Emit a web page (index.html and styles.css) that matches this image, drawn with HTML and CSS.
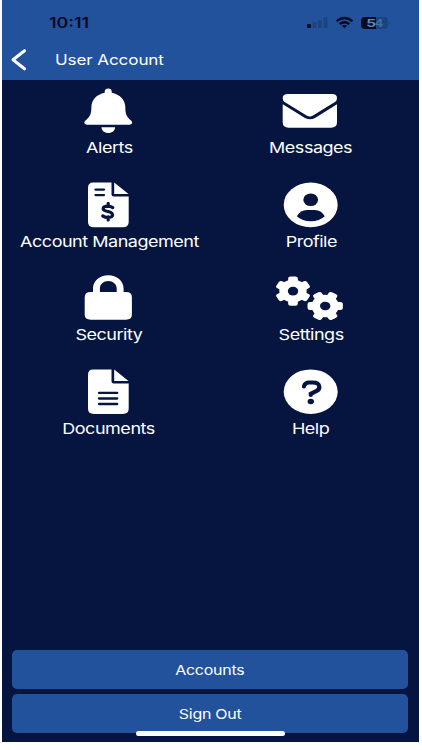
FILE: index.html
```html
<!DOCTYPE html>
<html lang="en">

<head>
	<meta charset="UTF-8">
	<title>User Account</title>
	<link rel="stylesheet" href="styles.css">
</head>

<body>
	<div class="phone">
		<header>
			<div class="status">
				<span class="time">10:11</span>
				<svg class="signal" width="84" height="16" viewBox="306 15 84 16">
					<rect x="307" y="24" width="4" height="4" rx="1" fill="#020b22" />
					<g fill="#1b4380">
						<rect x="312.5" y="22" width="4" height="6" rx="1" />
						<rect x="318" y="20" width="4" height="8" rx="1" />
						<rect x="323.6" y="17.3" width="4" height="10.7" rx="1" />
						<rect x="361" y="17" width="27" height="12" rx="4" />
						<path d="M389 21.2q1.8 1.8 0 3.6z" />
					</g>
					<path d="M365 17h11v12h-11q-4 0-4-4v-4q0-4 4-4z" fill="#020b22" />
					<g fill="none" stroke="#020b22" stroke-width="2.3">
						<path d="M336.5 21.1Q344.5 15 352.5 21.1" />
						<path d="M339.6 24.2Q344.5 20.4 349.4 24.2" />
					</g>
					<path d="M341.8 25.800q2.700-1.600 5.400 0L344.500 28.300z" fill="#020b22" />
					<text class="level" x="366.200" y="27.100" textLength="9.800" lengthAdjust="spacingAndGlyphs" fill="#6187bd">5</text>
					<text class="level" x="374.800" y="27.100" textLength="8.500" lengthAdjust="spacingAndGlyphs" fill="#426ba9">4</text>
				</svg>
			</div>
			<div class="title">
				<svg width="18" height="24" viewBox="10 48 18 24">
					<path d="M24.500 50.700L13 59.800 24.500 68.800" fill="none" stroke="#fff" stroke-width="3" stroke-linecap="round" stroke-linejoin="round" />
				</svg>
				<h1>User Account</h1>
			</div>
		</header>

		<ul class="menu">
			<li>
				<svg viewBox="74 88 68 46">
					<path d="M108.200 88.500c2 0 3.500 1.300 3.500 3v1.300c8 1.500 13.600 7.300 13.600 14.300 0 7 1.300 10 5.700 13.400 2.200 1.800 1 4.200-1.300 4.200H87c-2.600 0-3.700-2.400-1.500-4.200 4.400-3.400 5.900-6.400 5.900-13.400 0-7 5.400-12.800 13.300-14.300v-1.300c0-1.700 1.500-3 3.500-3z" />
					<path d="M101.500 127.200h13.600c0 3.300-3 5.800-6.800 5.800s-6.800-2.500-6.800-5.800z" />
				</svg>
				<span>Alerts</span>
			</li>
			<li>
				<svg viewBox="276 88 68 46">
					<path d="M288 94h44q5 0 5 4.200 0 2.700-2.500 4.100L313 115.500q-3.200 2-6.400 0L285 102.300q-2.300-1.400-2.300-4.100 0-4.200 5.300-4.200z" />
					<path d="M282.700 104.300L305 117.900q5 2.700 10 0l22-13.600v18q0 5.400-6 5.400h-42.300q-6 0-6-5.400z" />
				</svg>
				<span>Messages</span>
			</li>
			<li>
				<svg viewBox="74 181.600 68 46">
					<path d="M93 182h18.500v12q0 2 2.300 2h14.900v25.500q0 5.300-6 5.300H94q-6 0-6-5.300v-34q0-5.500 5-5.500z" />
					<path d="M114.200 182.200l14.300 11.300h-14.300z" />
					<path class="line" d="M95.500 189.200h8.500M95.500 194.700h8.500" />
					<path class="dollar" d="M112.800 207.200q-2.300-1.500-4.900-1.500c-6 0-6.300 4.200-.9 5.200 7.800 1.400 6.800 6.200.7 6.200q-2.800 0-5-1.600M108.200 203v3M108.200 216.500v3" />
				</svg>
				<span>Account Management</span>
			</li>
			<li>
				<svg viewBox="276 181.600 68 46">
					<ellipse cx="310.700" cy="204.500" rx="27" ry="22.300" />
					<ellipse class="cut" cx="310.700" cy="199.300" rx="7.400" ry="6.300" />
					<path class="cut" d="M296.800 215.800q3.800-6.200 10-6.200h8q6.200 0 10 6.200-5.500 5-14 5t-14-5z" />
				</svg>
				<span>Profile</span>
			</li>
			<li>
				<svg viewBox="74 275.200 68 46">
					<path fill-rule="evenodd" d="M93 292.300v-3.500c0-7.500 6.800-13.300 15.300-13.300s15.300 5.800 15.300 13.300v3.500h2.300q6 0 6 5.200v17.300q0 5.200-6 5.200H90.700q-6 0-6-5.200v-17.300q0-5.200 6-5.200zM99.900 292.300h16.800v-3.500c0-4.200-3.700-7.500-8.400-7.500s-8.400 3.300-8.400 7.500z" />
				</svg>
				<span>Security</span>
			</li>
			<li>
				<svg viewBox="276 275.200 68 46">
					<defs>
						<g id="gear">
							<circle r="11.300" />
							<rect x="-4" y="-14.600" width="8" height="29.200" rx="2" />
							<rect x="-4" y="-14.600" width="8" height="29.200" rx="2" transform="rotate(60)" />
							<rect x="-4" y="-14.600" width="8" height="29.200" rx="2" transform="rotate(120)" />
							<circle class="cut" r="4.300" />
						</g>
					</defs>
					<use href="#gear" transform="translate(293 291.300) scale(1.210 1)" />
					<use href="#gear" transform="translate(325.200 306.200) scale(1.210 1) rotate(30)" />
				</svg>
				<span>Settings</span>
			</li>
			<li>
				<svg viewBox="74 368.800 68 46">
					<path d="M93 369.200h18.500v12q0 2 2.300 2h14.900v25.300q0 5.200-6 5.200H94q-6 0-6-5.200v-34q0-5.300 5-5.300z" />
					<path d="M114.200 369.400l14.300 11.300h-14.300z" />
					<path class="line" d="M99 392.700h18.200M99 398.300h18.200M99 403.800h18.200" />
				</svg>
				<span>Documents</span>
			</li>
			<li>
				<svg viewBox="276 368.800 68 46">
					<ellipse cx="310.700" cy="391.500" rx="27" ry="22.300" />
					<path class="mark" d="M304 386.200c.6-2.600 2.300-3.900 5-3.900h4c7.300 0 8.100 6.300 3.200 8.600l-5.400 2.700v1.100" />
					<ellipse class="cut" cx="310.800" cy="401.300" rx="3.200" ry="2.700" />
				</svg>
				<span>Help</span>
			</li>
		</ul>

		<div class="actions">
			<button><span>Accounts</span></button>
			<button><span>Sign Out</span></button>
			<i class="home"></i>
		</div>
	</div>
</body>

</html>
```
FILE: styles.css
```css
body,
ul,
h1 {
	margin: 0;
	padding: 0;
}

body {
	background: #fff;
	color: #fff;
	font-family: Inter, "Liberation Sans", sans-serif;
}

.phone {
	display: flex;
	flex-direction: column;
	width: 417px;
	height: 742px;
	margin-left: 1.5px;
	background: #051540;
}

header {
	height: 80px;
	background: #23529d;
}

.status {
	display: flex;
	justify-content: space-between;
	height: 33px;
	padding: 15px 28.5px 0 47px;
	box-sizing: border-box;
}

.time {
	color: #020b22;
	font-size: 14.4px;
	font-weight: 600;
	line-height: 16px;
	transform: scaleX(1.24);
	transform-origin: left;
}

.level {
	font-size: 11px;
	font-weight: 700;
}

.title {
	display: flex;
	align-items: center;
	height: 24px;
	margin-top: 15px;
	padding-left: 8.5px;
}

h1 {
	margin-left: 26.5px;
	font-size: 14.6px;
	font-weight: 400;
	letter-spacing: -0.1px;
	transform: scaleX(1.17);
	transform-origin: left;
}

.menu {
	display: grid;
	grid-template-columns: 202px 202px;
	grid-auto-rows: 93.6px;
	padding: 8px 0 0 5.5px;
	list-style: none;
}

.menu li {
	display: flex;
	flex-direction: column;
	align-items: center;
}

.menu svg {
	width: 68px;
	height: 46px;
	fill: #fff;
}

.menu span {
	margin-top: 3px;
	font-size: 15px;
	line-height: 20px;
	letter-spacing: -0.4px;
	white-space: nowrap;
	transform: translate(1px, 0.8px) scaleX(1.2);
}

.menu .cut {
	fill: #051540;
}

.line,
.dollar,
.mark {
	fill: none;
	stroke: #051540;
	stroke-width: 2.3;
	stroke-linecap: round;
}

.dollar {
	stroke-width: 3.2;
}

.mark {
	stroke-width: 4.2;
}

.actions {
	position: relative;
	display: flex;
	flex-direction: column;
	gap: 5px;
	margin-top: auto;
	padding: 0 10.5px 9px;
}

.actions button {
	height: 39px;
	padding: 0;
	border: 0;
	border-radius: 5px;
	background: #23529d;
	color: #fff;
	font: 13.3px/39px Inter, "Liberation Sans", sans-serif;
	letter-spacing: -0.2px;
}

.actions span {
	display: inline-block;
	transform: translateY(0.8px) scaleX(1.2);
}

.home {
	position: absolute;
	left: 134.5px;
	bottom: 6.5px;
	width: 149px;
	height: 4.5px;
	border-radius: 3px;
	background: #fff;
}
```
